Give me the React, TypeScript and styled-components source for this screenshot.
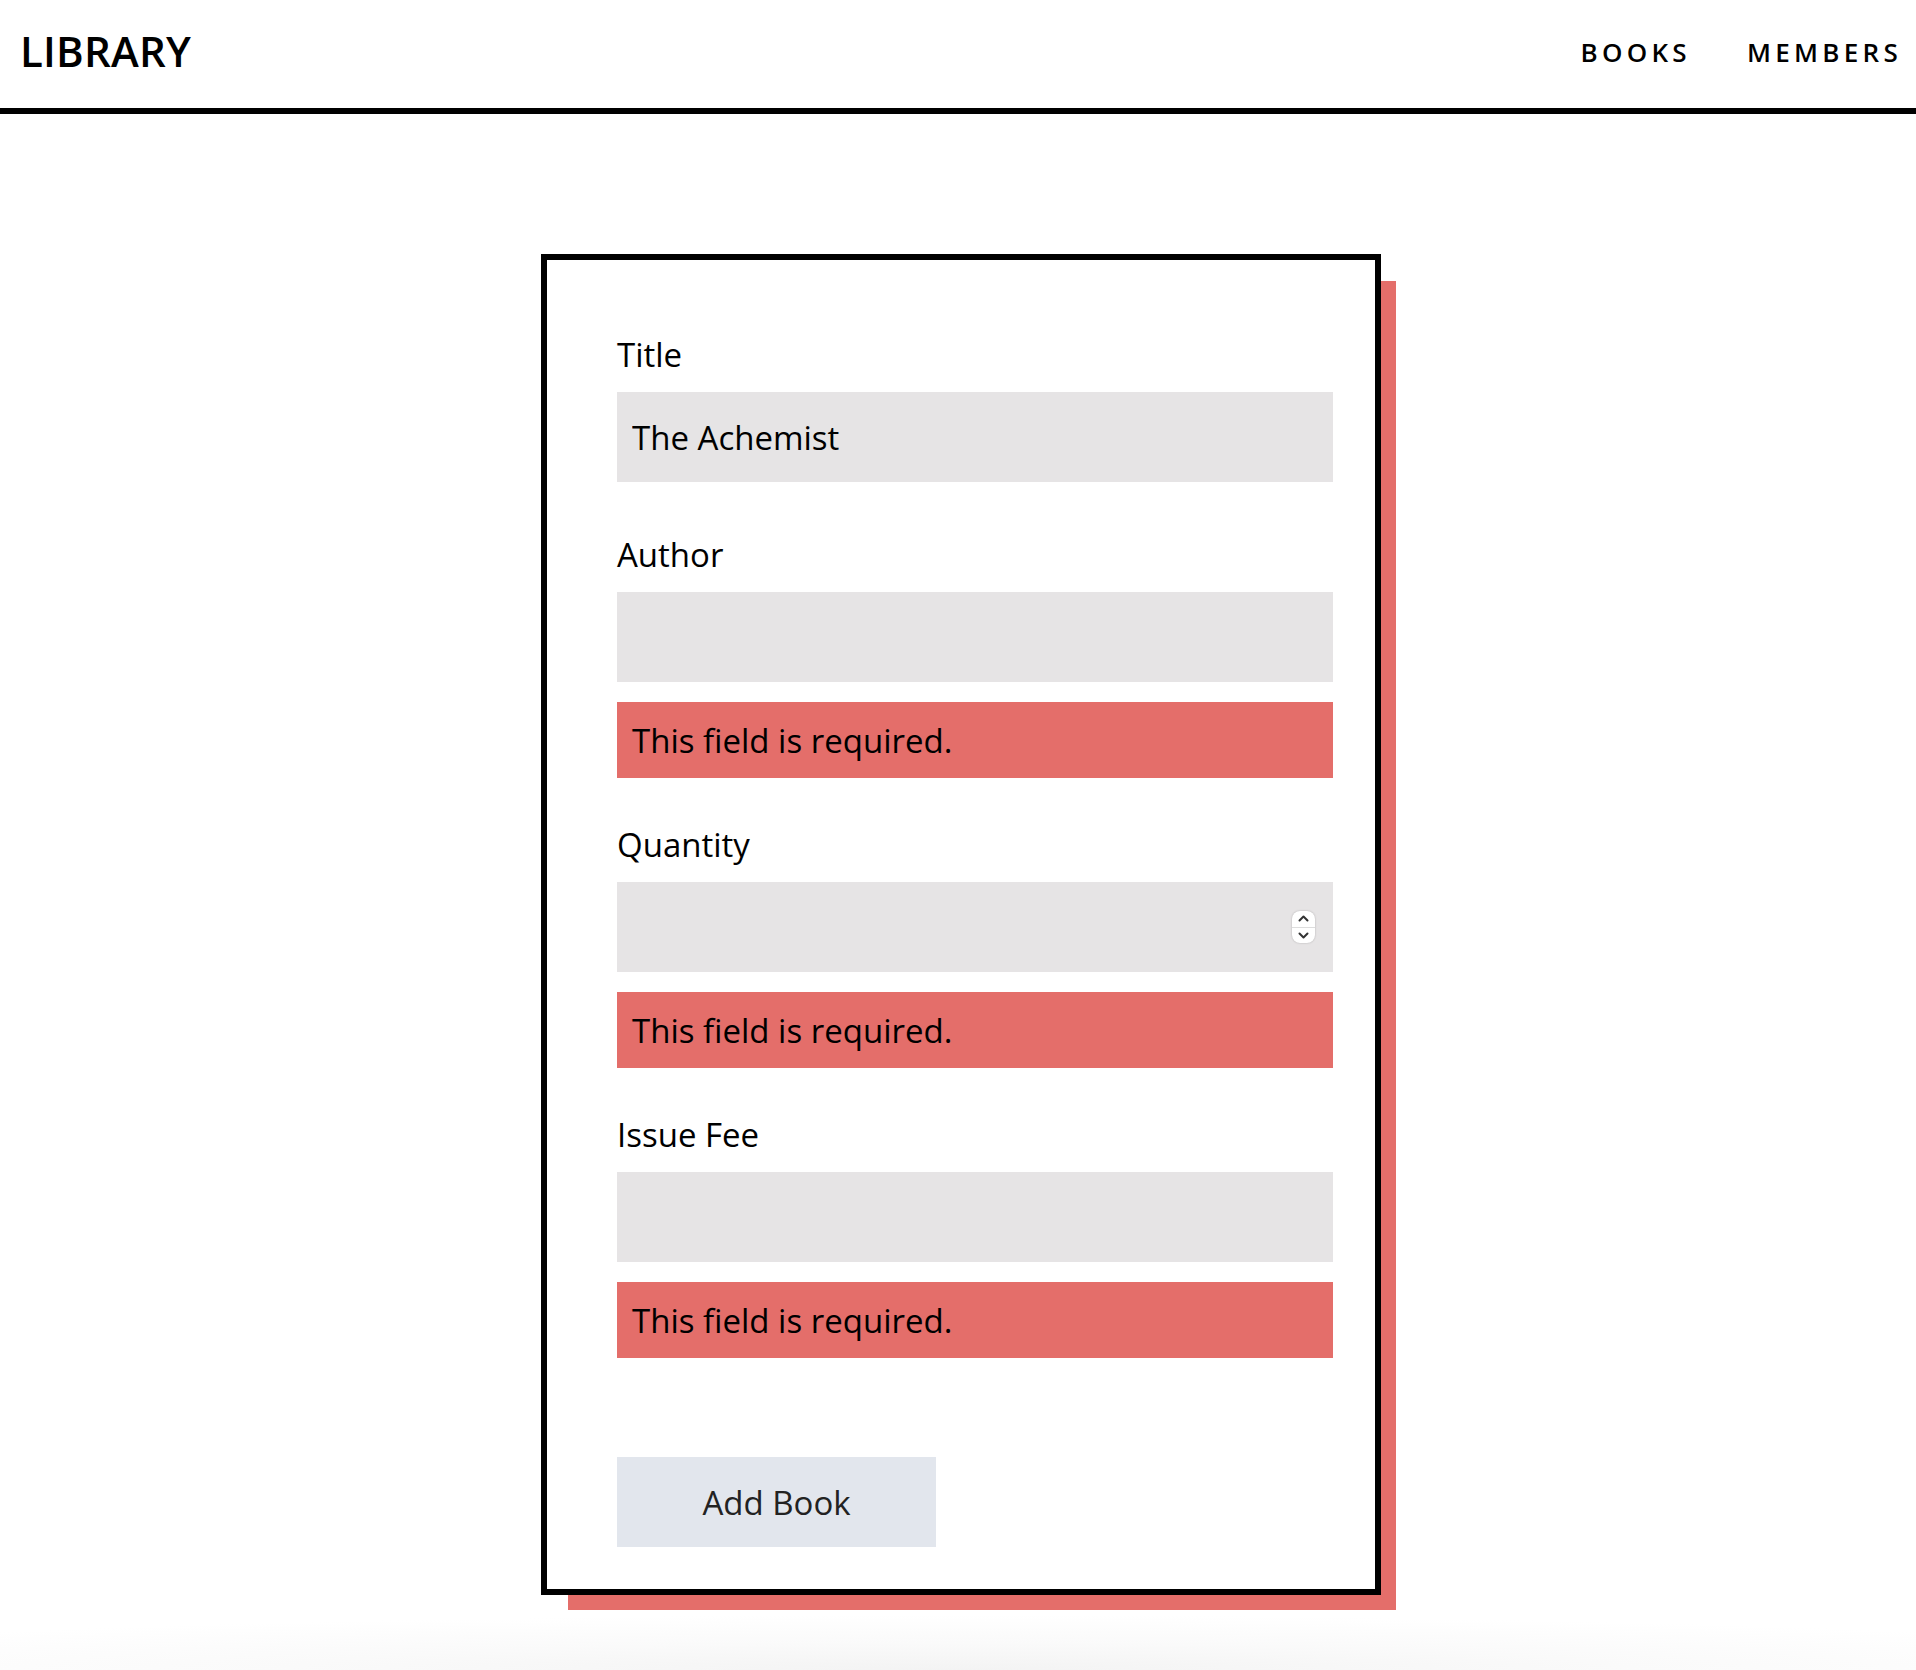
import React from 'react';
import styled, { createGlobalStyle } from 'styled-components';

const GlobalStyle = createGlobalStyle`
  html, body {
    margin: 0;
    padding: 0;
    background: #fff;
    font-family: 'Open Sans', 'Noto Sans', Arial, sans-serif;
    color: #000;
  }
  * { box-sizing: border-box; }
`;

const Header = styled.header`
  height: 114px;
  border-bottom: 6px solid #000;
  display: flex;
  align-items: center;
  justify-content: space-between;
  padding: 0 14px 8px 20px;
`;

const Logo = styled.div`
  font-size: 42px;
  font-weight: 600;
  letter-spacing: 0.2px;
`;

const Nav = styled.nav`
  display: flex;
  align-items: center;
  gap: 56px;
  padding-top: 4px;

  a {
    font-size: 26px;
    font-weight: 600;
    letter-spacing: 4.3px;
    color: #000;
    text-decoration: none;
  }
`;

const Main = styled.main`
  display: flex;
  justify-content: center;
  padding: 140px 0 0 6px;
`;

const Card = styled.form`
  width: 840px;
  border: 6px solid #000;
  padding: 75px 43px 42px 70px;
  box-shadow: 21px 21px 0 -6px #e46e6a;
  background: #fff;
`;

const Field = styled.div`
  display: flex;
  flex-direction: column;
  margin-bottom: 47px;
`;

const Label = styled.label`
  font-size: 33px;
  line-height: 40px;
  margin-bottom: 17px;
`;

const InputWrap = styled.div`
  position: relative;
  margin-bottom: 6px;
`;

const Input = styled.input`
  display: block;
  width: 716px;
  height: 90px;
  border: none;
  outline: none;
  background: #e6e4e5;
  padding: 0 15px;
  font-family: inherit;
  font-size: 33px;
  color: #000;
  -moz-appearance: textfield;

  &::-webkit-inner-spin-button,
  &::-webkit-outer-spin-button {
    -webkit-appearance: none;
    margin: 0;
  }
`;

const Spinner = styled.div`
  position: absolute;
  right: 17px;
  top: 50%;
  transform: translateY(-50%);
  width: 23px;
  height: 32px;
  background: #fff;
  border-radius: 8px;
  box-shadow: 0 0 2px rgba(0, 0, 0, 0.25);
  display: flex;
  flex-direction: column;
  align-items: center;
  justify-content: space-evenly;

  svg {
    display: block;
  }
`;

const SpinDivider = styled.div`
  width: 100%;
  height: 1px;
  background: #ddd;
`;

const Error = styled.div`
  margin-top: 14px;
  width: 716px;
  height: 76px;
  background: #e46e6a;
  padding: 0 15px;
  display: flex;
  align-items: center;
  font-size: 33px;
  color: #000;
`;

const Button = styled.button`
  margin-top: 52px;
  width: 319px;
  height: 90px;
  border: none;
  background: #e2e6ed;
  color: #222;
  font-family: inherit;
  font-size: 33px;
  cursor: pointer;
`;

const Footer = styled.div`
  height: 56px;
  margin-top: 20px;
  background: radial-gradient(ellipse 70% 100% at 50% 100%, #f3f3f3 0%, #fafafa 50%, #fff 100%);
`;

const Chevron = ({ up }: { up?: boolean }) => (
  <svg width="11" height="7" viewBox="0 0 11 7">
    <path
      d={up ? 'M1.5 5.5 L5.5 1.5 L9.5 5.5' : 'M1.5 1.5 L5.5 5.5 L9.5 1.5'}
      fill="none"
      stroke="#333"
      strokeWidth="2"
      strokeLinecap="round"
      strokeLinejoin="round"
    />
  </svg>
);

type FieldProps = {
  label: string;
  value?: string;
  type?: string;
  error?: boolean;
};

const FormField = ({ label, value, type = 'text', error }: FieldProps) => (
  <Field>
    <Label>{label}</Label>
    <InputWrap>
      <Input type={type} defaultValue={value} />
      {type === 'number' && (
        <Spinner>
          <Chevron up />
          <SpinDivider />
          <Chevron />
        </Spinner>
      )}
    </InputWrap>
    {error && <Error>This field is required.</Error>}
  </Field>
);

const App = () => {
  return (
    <>
      <GlobalStyle />
      <Header>
        <Logo>LIBRARY</Logo>
        <Nav>
          <a href="#books">BOOKS</a>
          <a href="#members">MEMBERS</a>
        </Nav>
      </Header>
      <Main>
        <Card onSubmit={(e) => e.preventDefault()}>
          <FormField label="Title" value="The Achemist" />
          <FormField label="Author" error />
          <FormField label="Quantity" type="number" error />
          <FormField label="Issue Fee" error />
          <Button type="submit">Add Book</Button>
        </Card>
      </Main>
      <Footer />
    </>
  );
};

export default App;
